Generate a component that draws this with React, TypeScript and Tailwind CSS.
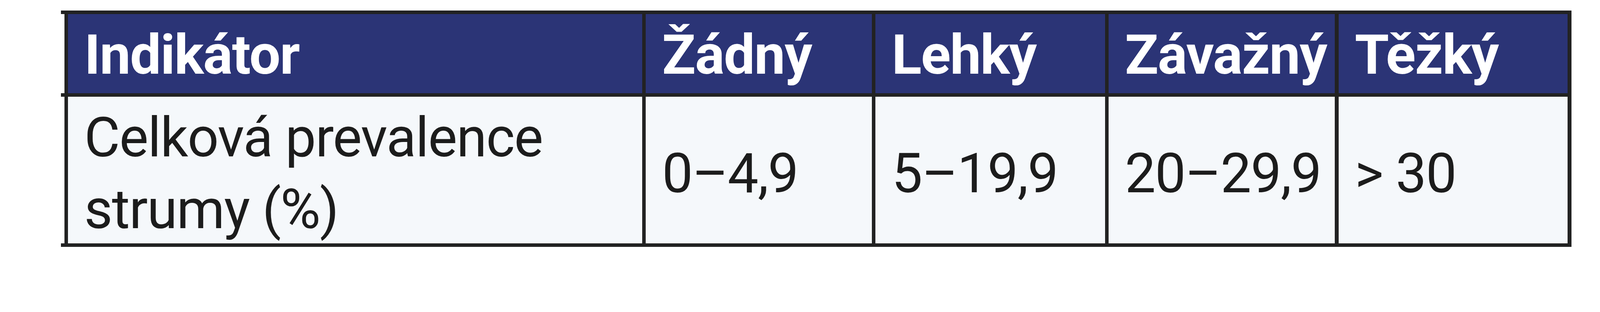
import React from 'react';

// All sizes are in vw so the 4516px-wide frame maps 1:1 whatever the viewport scale (1px = 0.02214vw)
const headers = ['Indikátor', 'Žádný', 'Lehký', 'Závažný', 'Těžký'];
const values = ['0–4,9', '5–19,9', '20–29,9', '> 30'];

const cols = 'grid-cols-[35.895vw_14.128vw_14.349vw_14.150vw_14.327vw]';

const App: React.FC = () => {
  return (
    <div className="w-screen h-[17.715vw] overflow-hidden bg-white pt-[0.6643vw] font-['Roboto',sans-serif]">
      <div className="ml-[3.8087vw] w-[94.398vw] flex flex-col">
        <div className="h-[0.2214vw] bg-[#222]" />

        {/* Header row */}
        <div className={`ml-[0.2214vw] grid ${cols} gap-x-[0.2214vw] border-x-[0.2214vw] border-[#222] bg-[#222]`}>
          {headers.map((h) => (
            <div
              key={h}
              className="h-[4.938vw] bg-[#2b3476] flex items-center pl-[1.0186vw] pt-[0.2214vw] text-white font-bold text-[3.4544vw] leading-none tracking-[-0.0443vw]"
            >
              {h}
            </div>
          ))}
        </div>

        <div className="h-[0.2214vw] bg-[#222]" />

        {/* Body row */}
        <div className={`ml-[0.2214vw] grid ${cols} gap-x-[0.2214vw] border-x-[0.2214vw] border-[#222] bg-[#222]`}>
          <div className="h-[9.190vw] bg-[#f5f8fb] flex items-center pl-[1.0186vw] pt-[0.4429vw] text-[#1c1c1c] text-[3.4322vw] leading-[4.4951vw] tracking-[-0.0443vw]">
            <span>
              Celková prevalence
              <br />
              strumy (%)
            </span>
          </div>
          {values.map((v) => (
            <div
              key={v}
              className="h-[9.190vw] bg-[#f5f8fb] flex items-center pl-[1.0186vw] pt-[0.4429vw] text-[#1c1c1c] text-[3.4322vw] leading-none tracking-[-0.0443vw]"
            >
              {v}
            </div>
          ))}
        </div>

        <div className="h-[0.2214vw] bg-[#222]" />
      </div>
    </div>
  );
};

export default App;
